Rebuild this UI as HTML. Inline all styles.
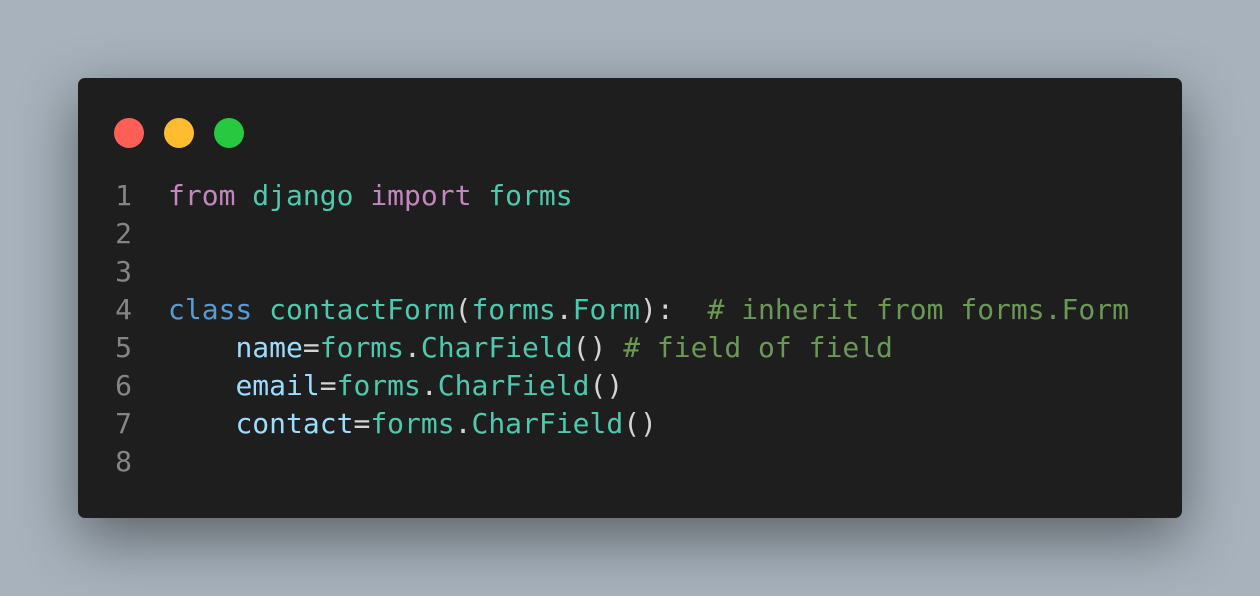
<!DOCTYPE html>
<html><head><style>
html,body{margin:0;width:1260px;height:596px;overflow:hidden;background:#a7b2bc;}
.win{position:absolute;left:78px;top:78px;width:1104px;height:440px;background:#1e1e1e;border-radius:7px;box-shadow:0 20px 60px rgba(0,0,0,.45);}
.dot{position:absolute;top:40px;width:30px;height:30px;border-radius:50%;}
pre{position:absolute;left:0;top:99px;margin:0;font-family:"DejaVu Sans Mono","Liberation Mono",monospace;font-size:28px;line-height:38px;color:#d4d4d4;}
.n{display:inline-block;width:54px;text-align:right;color:#858585;margin-right:36px;}
.k{color:#c586c0}.t{color:#4ec9b0}.b{color:#569cd6}.v{color:#9cdcfe}.c{color:#6a9955}
</style></head><body>
<div class="win">
<div class="dot" style="left:36px;background:#ff5f57"></div>
<div class="dot" style="left:86px;background:#febc2e"></div>
<div class="dot" style="left:136px;background:#28c840"></div>
<pre><span class="n">1</span><span class="k">from</span> <span class="t">django</span> <span class="k">import</span> <span class="t">forms</span>
<span class="n">2</span>
<span class="n">3</span>
<span class="n">4</span><span class="b">class</span> <span class="t">contactForm</span>(<span class="t">forms</span>.<span class="t">Form</span>):  <span class="c"># inherit from forms.Form</span>
<span class="n">5</span>    <span class="v">name</span>=<span class="t">forms</span>.<span class="t">CharField</span>() <span class="c"># field of field</span>
<span class="n">6</span>    <span class="v">email</span>=<span class="t">forms</span>.<span class="t">CharField</span>()
<span class="n">7</span>    <span class="v">contact</span>=<span class="t">forms</span>.<span class="t">CharField</span>()
<span class="n">8</span></pre>
</div>
</body></html>
